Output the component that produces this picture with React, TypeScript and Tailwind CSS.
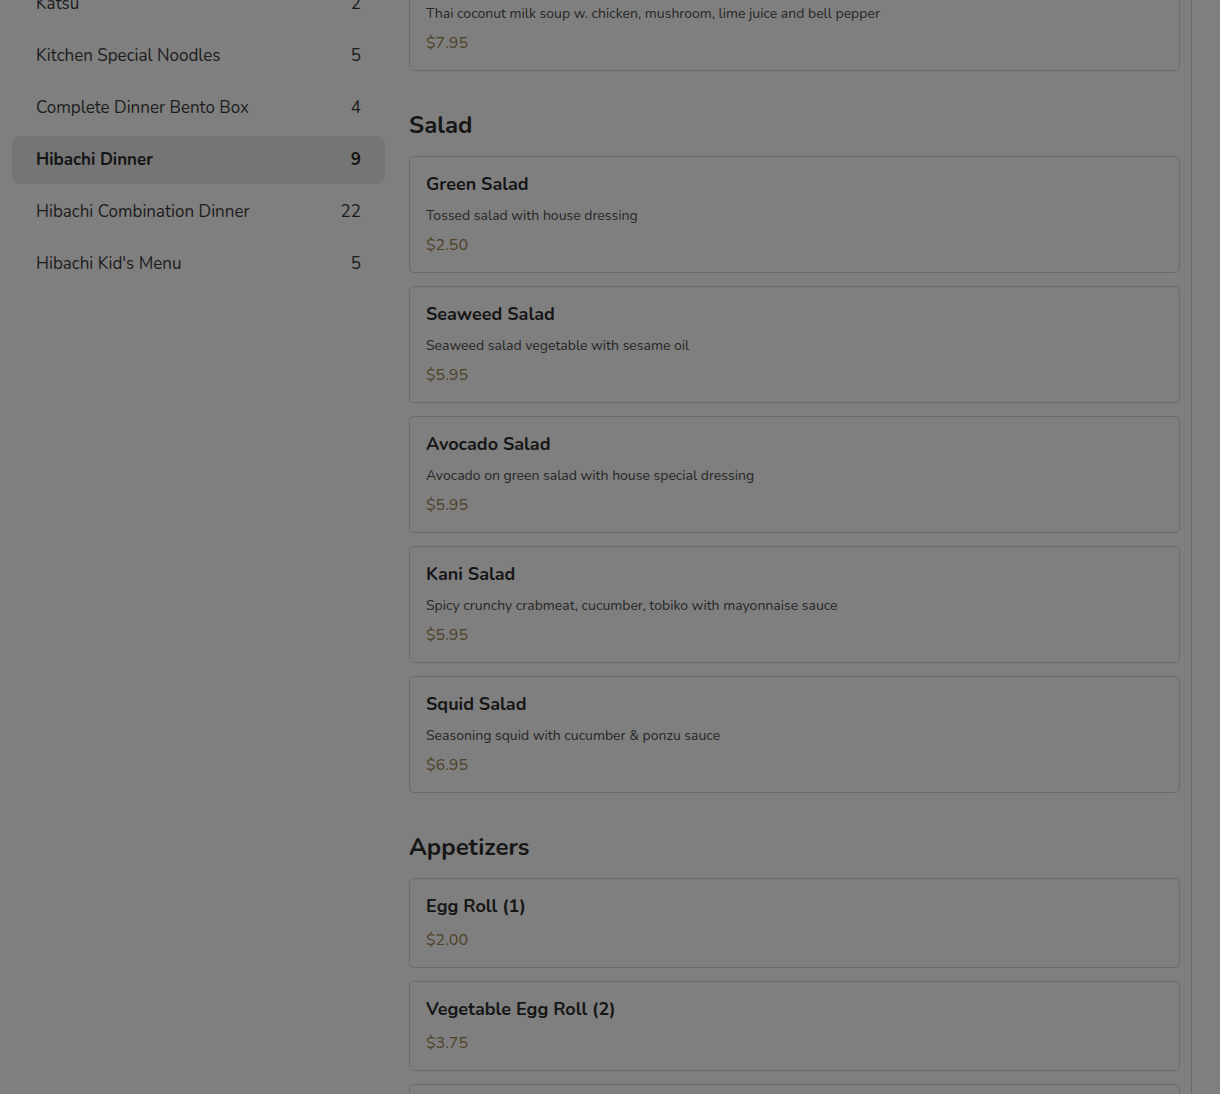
import React from "react";

type Item = { name: string; desc?: string; price: string };

const sidebar: { name: string; count: number; active?: boolean }[] = [
  { name: "Katsu", count: 2 },
  { name: "Kitchen Special Noodles", count: 5 },
  { name: "Complete Dinner Bento Box", count: 4 },
  { name: "Hibachi Dinner", count: 9, active: true },
  { name: "Hibachi Combination Dinner", count: 22 },
  { name: "Hibachi Kid's Menu", count: 5 },
];

const sections: { title?: string; items: Item[] }[] = [
  {
    items: [
      {
        name: "Tom Yum Soup",
        desc: "Thai coconut milk soup w. chicken, mushroom, lime juice and bell pepper",
        price: "$7.95",
      },
    ],
  },
  {
    title: "Salad",
    items: [
      { name: "Green Salad", desc: "Tossed salad with house dressing", price: "$2.50" },
      { name: "Seaweed Salad", desc: "Seaweed salad vegetable with sesame oil", price: "$5.95" },
      { name: "Avocado Salad", desc: "Avocado on green salad with house special dressing", price: "$5.95" },
      { name: "Kani Salad", desc: "Spicy crunchy crabmeat, cucumber, tobiko with mayonnaise sauce", price: "$5.95" },
      { name: "Squid Salad", desc: "Seasoning squid with cucumber & ponzu sauce", price: "$6.95" },
    ],
  },
  {
    title: "Appetizers",
    items: [
      { name: "Egg Roll (1)", price: "$2.00" },
      { name: "Vegetable Egg Roll (2)", price: "$3.75" },
      { name: "Spring Roll (2)", price: "$3.75" },
      { name: "Shrimp Egg Roll (1)", price: "$2.95" },
    ],
  },
];

function Card({ item }: { item: Item }) {
  return (
    <div className="rounded-[5px] border border-[#6c6c6c] px-4 pt-[17px] pb-[15px]">
      <div className="text-[18px] leading-5 font-bold text-[#161616]">{item.name}</div>
      {item.desc && (
        <div className="mt-3 text-[14px] leading-5 text-[#262626]">{item.desc}</div>
      )}
      <div
        className={
          (item.desc ? "mt-[7px] " : "mt-3 ") +
          "text-[16px] leading-6 text-[#4f4128]"
        }
      >
        {item.price}
      </div>
    </div>
  );
}

export default function App() {
  return (
    <div
      className="h-[1094px] w-[1220px] overflow-hidden bg-[#7f7f7f]"
      style={{ fontFamily: "Nunito, 'Noto Sans', sans-serif" }}
    >
      <div className="flex w-[1192px] h-full border-r border-[#6a6a6a] pl-3 pr-[11px]">
        <aside className="w-[373px] shrink-0 -mt-[20px] flex flex-col gap-1">
          {sidebar.map((s) => (
            <div
              key={s.name}
              className={
                "flex h-12 items-center justify-between rounded-lg px-6 text-[17px] " +
                (s.active ? "bg-[#757575] font-bold text-[#141414]" : "text-[#1c1c1c]")
              }
            >
              <span>{s.name}</span>
              <span>{s.count}</span>
            </div>
          ))}
        </aside>
        <main className="ml-6 w-[771px] shrink-0 -mt-[46px] flex flex-col gap-[38px]">
          {sections.map((sec, i) => (
            <section key={i}>
              {sec.title && (
                <h2 className="mb-[15px] text-[24px] leading-8 font-bold text-[#161616]">
                  {sec.title}
                </h2>
              )}
              <div className="flex flex-col gap-[13px]">
                {sec.items.map((it) => (
                  <Card key={it.name} item={it} />
                ))}
              </div>
            </section>
          ))}
        </main>
      </div>
    </div>
  );
}
